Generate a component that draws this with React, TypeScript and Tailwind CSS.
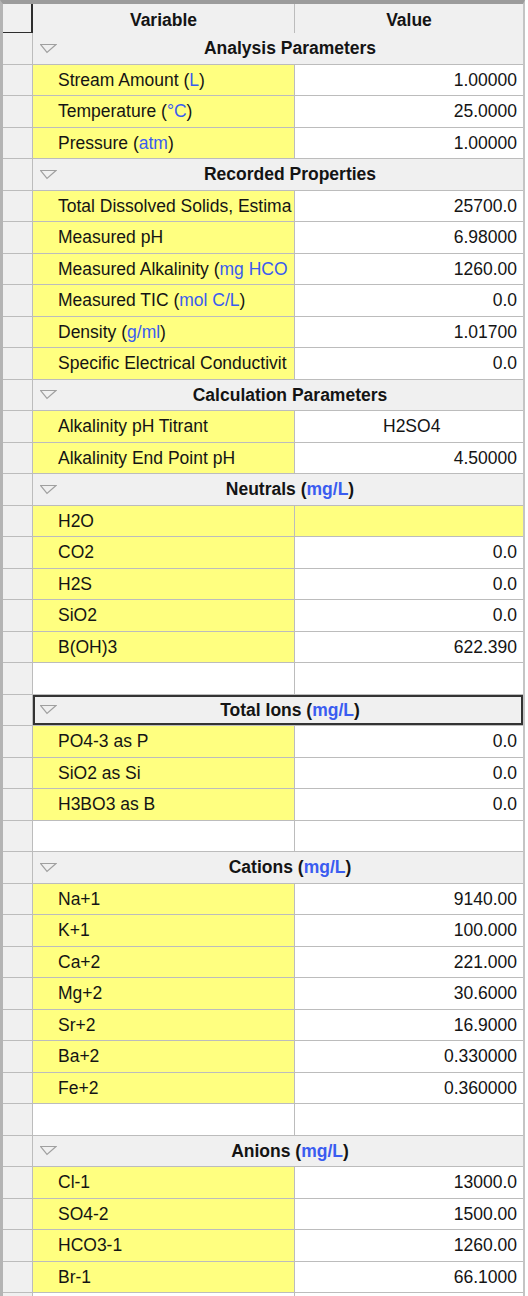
import React from "react";

type Row =
  | { kind: "group"; title: string; unit?: string; focus?: boolean }
  | { kind: "data"; label: string; unit?: string; tail?: string; value: string; valueYellow?: boolean; center?: boolean }
  | { kind: "empty" };

const rows: Row[] = [
  { kind: "group", title: "Analysis Parameters" },
  { kind: "data", label: "Stream Amount (", unit: "L", tail: ")", value: "1.00000" },
  { kind: "data", label: "Temperature (", unit: "°C", tail: ")", value: "25.0000" },
  { kind: "data", label: "Pressure (", unit: "atm", tail: ")", value: "1.00000" },
  { kind: "group", title: "Recorded Properties" },
  { kind: "data", label: "Total Dissolved Solids, Estima", value: "25700.0" },
  { kind: "data", label: "Measured pH", value: "6.98000" },
  { kind: "data", label: "Measured Alkalinity (", unit: "mg HCO", value: "1260.00" },
  { kind: "data", label: "Measured TIC (", unit: "mol C/L", tail: ")", value: "0.0" },
  { kind: "data", label: "Density (", unit: "g/ml", tail: ")", value: "1.01700" },
  { kind: "data", label: "Specific Electrical Conductivit", value: "0.0" },
  { kind: "group", title: "Calculation Parameters" },
  { kind: "data", label: "Alkalinity pH Titrant", value: "H2SO4", center: true },
  { kind: "data", label: "Alkalinity End Point pH", value: "4.50000" },
  { kind: "group", title: "Neutrals", unit: "mg/L" },
  { kind: "data", label: "H2O", value: "", valueYellow: true },
  { kind: "data", label: "CO2", value: "0.0" },
  { kind: "data", label: "H2S", value: "0.0" },
  { kind: "data", label: "SiO2", value: "0.0" },
  { kind: "data", label: "B(OH)3", value: "622.390" },
  { kind: "empty" },
  { kind: "group", title: "Total Ions", unit: "mg/L", focus: true },
  { kind: "data", label: "PO4-3 as P", value: "0.0" },
  { kind: "data", label: "SiO2 as Si", value: "0.0" },
  { kind: "data", label: "H3BO3 as B", value: "0.0" },
  { kind: "empty" },
  { kind: "group", title: "Cations", unit: "mg/L" },
  { kind: "data", label: "Na+1", value: "9140.00" },
  { kind: "data", label: "K+1", value: "100.000" },
  { kind: "data", label: "Ca+2", value: "221.000" },
  { kind: "data", label: "Mg+2", value: "30.6000" },
  { kind: "data", label: "Sr+2", value: "16.9000" },
  { kind: "data", label: "Ba+2", value: "0.330000" },
  { kind: "data", label: "Fe+2", value: "0.360000" },
  { kind: "empty" },
  { kind: "group", title: "Anions", unit: "mg/L" },
  { kind: "data", label: "Cl-1", value: "13000.0" },
  { kind: "data", label: "SO4-2", value: "1500.00" },
  { kind: "data", label: "HCO3-1", value: "1260.00" },
  { kind: "data", label: "Br-1", value: "66.1000" },
  { kind: "empty" },
];

const Tri = () => (
  <svg width="17" height="11" viewBox="0 0 17 11" className="shrink-0">
    <polygon points="0.5,1.5 16,1.5 7,9.5" fill="none" stroke="#a0a0a0" strokeWidth="1.2" />
  </svg>
);

const RowHead = () => (
  <div className="bg-[#f0f0f0] border-r border-b border-[#bcbcbc]" />
);

export default function App() {
  return (
    <div className="w-[528px] h-[1296px] overflow-hidden bg-white font-['Liberation_Sans',Arial,sans-serif] text-[17.5px] text-[#141414]">
      <div className="w-[525px] border-l-[3px] border-l-[#b4b4b4] border-t-[4px] border-t-[#9c9c9c] border-r-2 border-r-[#c4c4c4]">
        {/* header */}
        <div className="grid grid-cols-[30px_262px_228px] h-[29px]">
          <div className="bg-[#f0f0f0] border-r-2 border-b-2 border-[#2e2e2e]" />
          <div className="bg-[#f0f0f0] border-r border-b border-[#bcbcbc] flex items-center justify-center font-bold pt-[3px]">
            Variable
          </div>
          <div className="bg-[#f0f0f0] border-b border-[#bcbcbc] flex items-center justify-center font-bold pt-[3px]">
            Value
          </div>
        </div>
        {rows.map((r, i) => {
          if (r.kind === "group") {
            return (
              <div key={i} className="grid grid-cols-[30px_262px_228px] h-[31.5px]">
                <RowHead />
                <div
                  className={
                    "col-span-2 bg-[#f0f0f0] border-b border-[#bcbcbc] flex items-center pl-[7px] pr-[4px] " +
                    (r.focus ? "shadow-[inset_0_0_0_2px_#333333]" : "")
                  }
                >
                  <Tri />
                  <div className="flex-1 text-center font-bold pl-[4px]">
                    {r.title}
                    {r.unit ? (
                      <>
                        {" ("}
                        <span className="text-[#3a5cf0]">{r.unit}</span>
                        {")"}
                      </>
                    ) : null}
                  </div>
                </div>
              </div>
            );
          }
          if (r.kind === "empty") {
            return (
              <div key={i} className="grid grid-cols-[30px_262px_228px] h-[31.5px]">
                <RowHead />
                <div className="bg-white border-r border-b border-[#bcbcbc]" />
                <div className="bg-white border-b border-[#bcbcbc]" />
              </div>
            );
          }
          return (
            <div key={i} className="grid grid-cols-[30px_262px_228px] h-[31.5px]">
              <RowHead />
              <div className="bg-[#ffff80] border-r border-b border-[#bcbcbc] flex items-center pl-[25px] overflow-hidden whitespace-nowrap">
                {r.label}
                {r.unit ? <span className="text-[#3a5cf0]">{r.unit}</span> : null}
                {r.tail ?? ""}
              </div>
              <div
                className={
                  "border-b border-[#bcbcbc] flex items-center whitespace-nowrap " +
                  (r.valueYellow ? "bg-[#ffff80] " : "bg-white ") +
                  (r.center ? "justify-start pl-[88px]" : "justify-end pr-[6px]")
                }
              >
                {r.value}
              </div>
            </div>
          );
        })}
      </div>
    </div>
  );
}
